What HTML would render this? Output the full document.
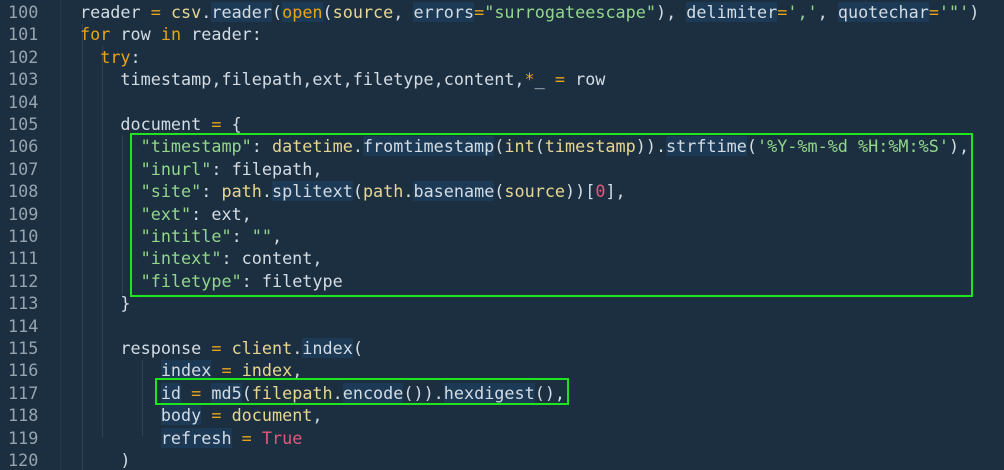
<!DOCTYPE html>
<html><head><style>
html,body{margin:0;padding:0;background:#1b2f41;width:1004px;height:470px;overflow:hidden}
.w{position:relative;width:1004px;height:470px;font-family:"DejaVu Sans Mono","Liberation Mono",monospace;font-size:16.8px;color:#d3dbe3}
.l{position:absolute;left:0;height:22.4px;line-height:22.4px;white-space:pre}
.n{position:absolute;left:8px;color:#97a3ae}
.c{position:absolute;left:80px}
.k{color:#e8a317}.f{color:#e7d68f}.s{color:#93d68b}.t{color:#e2587a}.o{color:#e8a317}
.h{background:#1c3a55}
.g{position:absolute;width:1px;background:#2d4255}
.b{position:absolute;border:2px solid #1fe51f}
</style></head><body><div class="w">
<div class="g" style="left:60px;top:0;height:470px;background:#24384b"></div>
<div class="g" style="left:82px;top:24px;height:446px"></div>
<div class="g" style="left:102px;top:46px;height:392px"></div>
<div class="g" style="left:122px;top:135px;height:160px"></div>
<div class="g" style="left:142px;top:360px;height:76px"></div>
<div class="l" style="top:1px"><span class="n">100</span><span class="c">reader <span class="o">=</span> <span class="f">csv</span>.<span class="h">reader</span>(<span class="k h">open</span>(<span class="f">source</span>, <span class="h">errors</span><span class="o">=</span><span class="s">"surrogateescape"</span>), <span class="h">delimiter</span><span class="o">=</span><span class="s">','</span>, <span class="h">quotechar</span><span class="o">=</span><span class="s">'"'</span>)</span></div>
<div class="l" style="top:23.4px"><span class="n">101</span><span class="c"><span class="k">for</span> row <span class="k">in</span> reader:</span></div>
<div class="l" style="top:45.8px"><span class="n">102</span><span class="c">  <span class="k">try</span>:</span></div>
<div class="l" style="top:68.2px"><span class="n">103</span><span class="c">    timestamp,filepath,ext,filetype,content,<span class="o">*</span>_ <span class="o">=</span> row</span></div>
<div class="l" style="top:90.6px"><span class="n">104</span></div>
<div class="l" style="top:113px"><span class="n">105</span><span class="c">    document <span class="o">=</span> {</span></div>
<div class="l" style="top:135.4px"><span class="n">106</span><span class="c">      <span class="s">"timestamp"</span>: <span class="f">datetime</span>.<span class="h">fromtimestamp</span>(<span class="f">int</span>(<span class="f">timestamp</span>)).<span class="h">strftime</span>(<span class="s">'%Y-%m-%d %H:%M:%S'</span>),</span></div>
<div class="l" style="top:157.8px"><span class="n">107</span><span class="c">      <span class="s">"inurl"</span>: filepath,</span></div>
<div class="l" style="top:180.2px"><span class="n">108</span><span class="c">      <span class="s">"site"</span>: <span class="f">path</span>.<span class="h">splitext</span>(<span class="f">path</span>.<span class="h">basename</span>(<span class="f">source</span>))[<span class="t">0</span>],</span></div>
<div class="l" style="top:202.6px"><span class="n">109</span><span class="c">      <span class="s">"ext"</span>: ext,</span></div>
<div class="l" style="top:225px"><span class="n">110</span><span class="c">      <span class="s">"intitle"</span>: <span class="s">""</span>,</span></div>
<div class="l" style="top:247.4px"><span class="n">111</span><span class="c">      <span class="s">"intext"</span>: content,</span></div>
<div class="l" style="top:269.8px"><span class="n">112</span><span class="c">      <span class="s">"filetype"</span>: filetype</span></div>
<div class="l" style="top:292.2px"><span class="n">113</span><span class="c">    }</span></div>
<div class="l" style="top:314.6px"><span class="n">114</span></div>
<div class="l" style="top:337px"><span class="n">115</span><span class="c">    response <span class="o">=</span> <span class="f">client</span>.<span class="h">index</span>(</span></div>
<div class="l" style="top:359.4px"><span class="n">116</span><span class="c">        <span class="h">index</span> <span class="o">=</span> <span class="f">index</span>,</span></div>
<div class="l" style="top:381.8px"><span class="n">117</span><span class="c">        <span class="h">id</span> <span class="o">=</span> <span class="h">md5</span>(<span class="f">filepath</span>.<span class="h">encode</span>()).<span class="h">hexdigest</span>(),</span></div>
<div class="l" style="top:404.2px"><span class="n">118</span><span class="c">        <span class="h">body</span> <span class="o">=</span> <span class="f">document</span>,</span></div>
<div class="l" style="top:426.6px"><span class="n">119</span><span class="c">        <span class="h">refresh</span> <span class="o">=</span> <span class="t">True</span></span></div>
<div class="l" style="top:449px"><span class="n">120</span><span class="c">    )</span></div>
<div class="b" style="left:130px;top:133px;width:839px;height:160px"></div>
<div class="b" style="left:155px;top:378px;width:410px;height:23px"></div>
</div></body></html>
